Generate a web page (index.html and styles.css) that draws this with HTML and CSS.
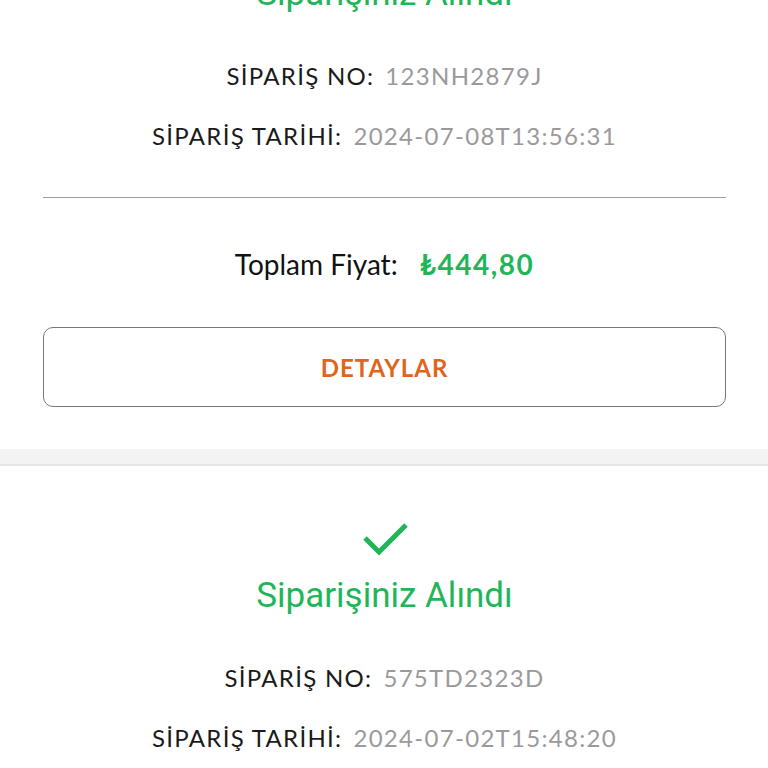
FILE: index.html
```html
<!DOCTYPE html>
<html lang="tr">
<head>
    <meta charset="UTF-8">
    <meta name="viewport" content="width=device-width, initial-scale=1.0">
    <title>Siparişlerim</title>
    <link rel="stylesheet" href="styles.css">
</head>
<body>
    <div class="orders">
        <div class="order-card">
            <svg class="check" width="48" height="38" viewBox="0 0 48 38">
                <polyline points="4,17 18,31 45,4" fill="none" stroke="#1fb65a" stroke-width="5"/>
            </svg>
            <h2 class="order-title">Siparişiniz Alındı</h2>
            <div class="info-row"><span class="label">SİPARİŞ NO:</span><span class="value">123NH2879J</span></div>
            <div class="info-row second"><span class="label">SİPARİŞ TARİHİ:</span><span class="value">2024-07-08T13:56:31</span></div>
            <hr class="divider">
            <div class="total-row"><span class="total-label">Toplam Fiyat:</span><span class="total-price">₺444,80</span></div>
            <button class="details-btn">DETAYLAR</button>
        </div>
        <div class="order-sep"></div>
        <div class="order-card">
            <svg class="check" width="48" height="38" viewBox="0 0 48 38">
                <polyline points="4,17 18,31 45,4" fill="none" stroke="#1fb65a" stroke-width="5"/>
            </svg>
            <h2 class="order-title">Siparişiniz Alındı</h2>
            <div class="info-row"><span class="label">SİPARİŞ NO:</span><span class="value">575TD2323D</span></div>
            <div class="info-row second"><span class="label">SİPARİŞ TARİHİ:</span><span class="value">2024-07-02T15:48:20</span></div>
            <hr class="divider">
            <div class="total-row"><span class="total-label">Toplam Fiyat:</span><span class="total-price">₺312,40</span></div>
            <button class="details-btn">DETAYLAR</button>
        </div>
    </div>
</body>
</html>
```

FILE: styles.css
```css
body {
    margin: 0;
    background: #fff;
    font-family: Lato, "Open Sans", sans-serif;
    overflow: hidden;
}
.orders {
    margin-top: -136px;
}
.order-card {
    background: #fff;
    padding: 55px 42px 42px 43px;
    text-align: center;
}
.check {
    display: block;
    margin: 0 auto;
    width: 48px;
    height: 38px;
}
.order-title {
    margin: 17px 0 0;
    font-family: Roboto, sans-serif;
    font-weight: 400;
    font-size: 35px;
    line-height: 40px;
    color: #1fb65a;
}
.info-row {
    margin-top: 45px;
    font-size: 24px;
    line-height: 34px;
    letter-spacing: 1.3px;
}
.info-row.second {
    margin-top: 26px;
}
.label {
    color: #1a1a1a;
    margin-right: 11px;
}
.value {
    color: #9a9a9a;
}
.divider {
    margin: 44px 0 0;
    border: none;
    border-top: 1px solid #9e9e9e;
}
.total-row {
    margin-top: 48px;
    font-size: 28px;
    line-height: 36px;
}
.total-label {
    color: #111;
    margin-right: 22px;
}
.total-price {
    color: #1fb65a;
    font-weight: 700;
    letter-spacing: 1.5px;
}
.details-btn {
    display: block;
    width: 100%;
    height: 80px;
    margin-top: 45px;
    background: #fff;
    border: 1px solid #777;
    border-radius: 10px;
    color: #e0641c;
    font-family: Lato, sans-serif;
    font-weight: 700;
    font-size: 24px;
    letter-spacing: 1px;
}
.order-sep {
    height: 15px;
    background: #f3f3f3;
    border-bottom: 2px solid #e6e6e6;
}
```
